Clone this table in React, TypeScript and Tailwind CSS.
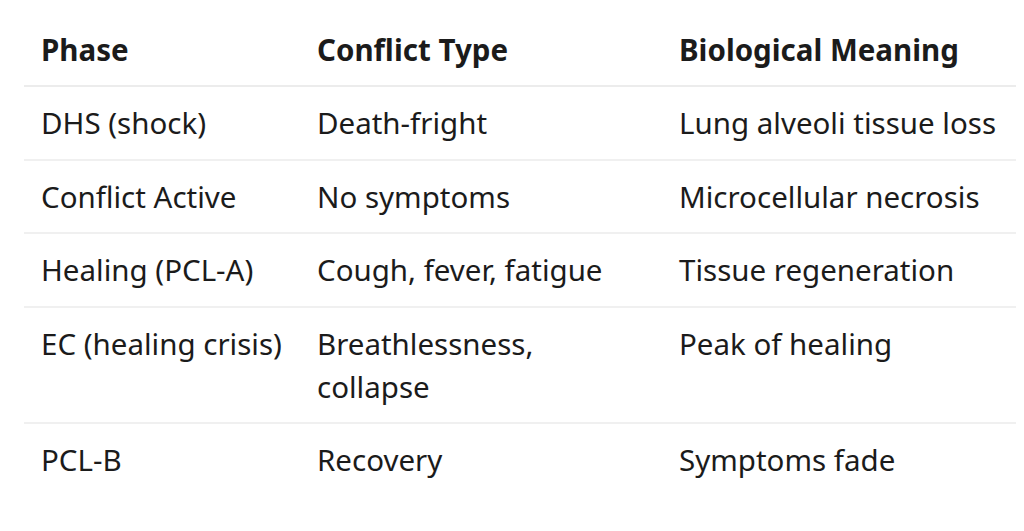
const rows = [
  ['DHS (shock)', 'Death-fright', 'Lung alveoli tissue loss'],
  ['Conflict Active', 'No symptoms', 'Microcellular necrosis'],
  ['Healing (PCL-A)', 'Cough, fever, fatigue', 'Tissue regeneration'],
  ['EC (healing crisis)', 'Breathlessness, collapse', 'Peak of healing'],
  ['PCL-B', 'Recovery', 'Symptoms fade'],
];

export default function App() {
  return (
    <div className="min-h-[531px] bg-white pt-[14px] pl-[24px] text-[#1b1b1b] font-['Noto_Sans',sans-serif]">
      <table className="w-[992px] table-fixed border-collapse text-[29.5px] leading-[43px]">
        <colgroup>
          <col className="w-[276px]" />
          <col className="w-[362px]" />
          <col className="w-[354px]" />
        </colgroup>
        <thead>
          <tr className="border-b-2 border-[#ececec]">
            <th className="px-[17px] py-[14px] text-left font-bold">Phase</th>
            <th className="px-[17px] py-[14px] text-left font-bold">Conflict Type</th>
            <th className="px-[17px] py-[14px] text-left font-bold">Biological Meaning</th>
          </tr>
        </thead>
        <tbody>
          {rows.map((r, i) => (
            <tr key={i} className={i < rows.length - 1 ? 'border-b-2 border-[#f0f0f0]' : ''}>
              {r.map((c, j) => (
                <td key={j} className="px-[17px] py-[14.25px] align-top">
                  {c}
                </td>
              ))}
            </tr>
          ))}
        </tbody>
      </table>
    </div>
  );
}
